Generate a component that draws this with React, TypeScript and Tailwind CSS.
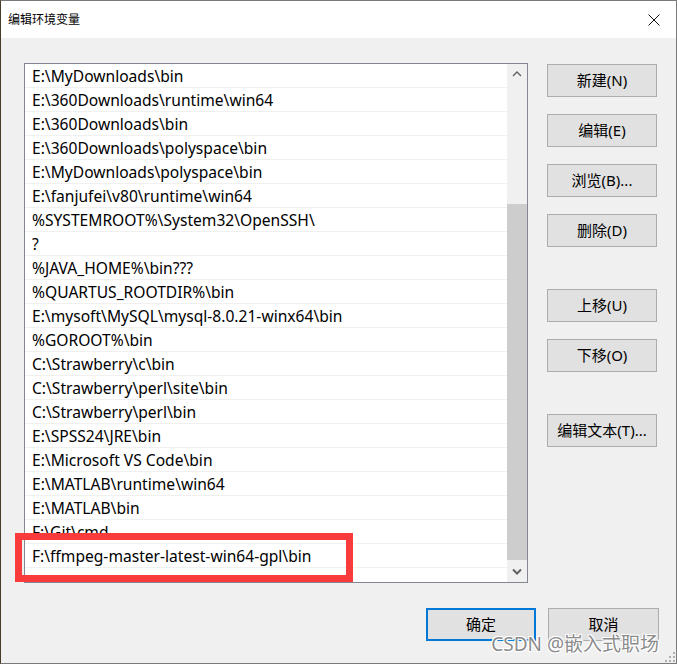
import React from 'react';

const paths = [
  'E:\\MyDownloads\\bin',
  'E:\\360Downloads\\runtime\\win64',
  'E:\\360Downloads\\bin',
  'E:\\360Downloads\\polyspace\\bin',
  'E:\\MyDownloads\\polyspace\\bin',
  'E:\\fanjufei\\v80\\runtime\\win64',
  '%SYSTEMROOT%\\System32\\OpenSSH\\',
  '?',
  '%JAVA_HOME%\\bin???',
  '%QUARTUS_ROOTDIR%\\bin',
  'E:\\mysoft\\MySQL\\mysql-8.0.21-winx64\\bin',
  '%GOROOT%\\bin',
  'C:\\Strawberry\\c\\bin',
  'C:\\Strawberry\\perl\\site\\bin',
  'C:\\Strawberry\\perl\\bin',
  'E:\\SPSS24\\JRE\\bin',
  'E:\\Microsoft VS Code\\bin',
  'E:\\MATLAB\\runtime\\win64',
  'E:\\MATLAB\\bin',
  'F:\\Git\\cmd',
  'F:\\ffmpeg-master-latest-win64-gpl\\bin',
];

const font = { fontFamily: '"Noto Sans", "Noto Sans CJK SC", sans-serif' };

function Btn({ label, className = '' }: { label: string; className?: string }) {
  return (
    <div
      className={`w-[110px] h-[33px] flex items-center justify-center bg-[#e1e1e1] border border-[#adadad] text-[15px] text-black ${className}`}
    >
      {label}
    </div>
  );
}

export default function App() {
  return (
    <div
      className="relative w-[677px] h-[664px] flex flex-col bg-[#f0f0f0] border border-[#7a7a7a] border-l-[#4a3a2a] overflow-hidden"
      style={font}
    >
      {/* Title bar */}
      <div className="h-[37px] bg-white flex items-center justify-between pl-[7px] pr-[16px] shrink-0">
        <span className="text-[12px] text-black">编辑环境变量</span>
        <svg width="12" height="12" viewBox="0 0 12 12">
          <path d="M0.5 0.5 L11.5 11.5 M11.5 0.5 L0.5 11.5" stroke="#111" strokeWidth="1" />
        </svg>
      </div>

      {/* Body */}
      <div className="flex pl-[23px] pt-[25px]">
        {/* List */}
        <div className="w-[504px] h-[520px] bg-white border border-[#828790] flex">
          <div className="flex-1 flex flex-col">
            {paths.map((p) => (
              <div
                key={p}
                className="h-[24px] shrink-0 border-b border-[#f0f0f0] pl-[7px] pt-[3px] flex items-center text-[15.6px] text-black whitespace-nowrap overflow-hidden"
              >
                {p}
              </div>
            ))}
          </div>
          {/* Scrollbar */}
          <div className="w-[20px] bg-[#f0f0f0] flex flex-col">
            <div className="h-[20px] flex items-center justify-center">
              <svg width="10" height="6" viewBox="0 0 10 6">
                <path d="M1 5 L5 1 L9 5" fill="none" stroke="#606060" strokeWidth="1.3" />
              </svg>
            </div>
            <div className="h-[120px]" />
            <div className="h-[356px] bg-[#cdcdcd]" />
            <div className="h-[22px] flex items-center justify-center">
              <svg width="10" height="7" viewBox="0 0 10 7">
                <path d="M1 1.5 L5 5.5 L9 1.5" fill="none" stroke="#606060" strokeWidth="2" />
              </svg>
            </div>
          </div>
        </div>

        {/* Side buttons */}
        <div className="ml-[19px] pt-[1px] flex flex-col">
          <Btn label="新建(N)" />
          <Btn label="编辑(E)" className="mt-[17px]" />
          <Btn label="浏览(B)..." className="mt-[17px]" />
          <Btn label="删除(D)" className="mt-[17px]" />
          <Btn label="上移(U)" className="mt-[42px]" />
          <Btn label="下移(O)" className="mt-[17px]" />
          <Btn label="编辑文本(T)..." className="mt-[42px]" />
        </div>
      </div>

      {/* Bottom buttons */}
      <div className="flex pl-[425px] pt-[25px] gap-[12px]">
        <div className="w-[110px] h-[33px] flex items-center justify-center bg-[#e1e1e1] border-2 border-[#0078d7] text-[15px] text-black">
          确定
        </div>
        <Btn label="取消" className="w-[111px]" />
      </div>

      {/* Red highlight */}
      <div className="absolute left-[14px] top-[532px] w-[338px] h-[49px] border-[7px] border-[#f93b3b]" />

      {/* Watermark */}
      <div
        className="absolute right-[17px] bottom-[5px] text-[19px] text-[#8c8c8c]"
        style={{ textShadow: '1px 1px 0 #fff, -1px -1px 0 #fff, 1px -1px 0 #fff, -1px 1px 0 #fff' }}
      >
        CSDN @嵌入式职场
      </div>

      {/* Resize grip */}
      <svg className="absolute right-[1px] bottom-[1px]" width="11" height="11" viewBox="0 0 11 11">
        {[
          [8, 0], [8, 4], [4, 4], [8, 8], [4, 8], [0, 8],
        ].map(([x, y], i) => (
          <rect key={i} x={x + 1} y={y + 1} width="2" height="2" fill="#b0b0b0" />
        ))}
      </svg>
    </div>
  );
}
